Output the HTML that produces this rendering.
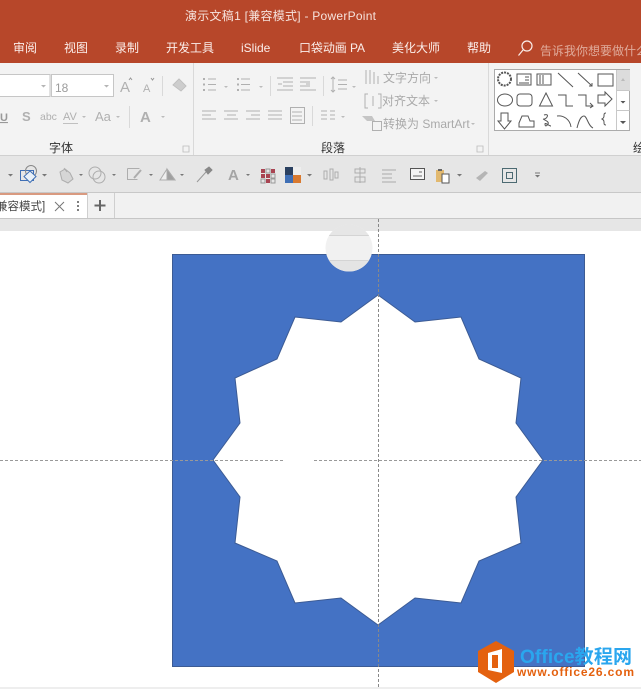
<!DOCTYPE html>
<html><head><meta charset="utf-8"><style>
html,body{margin:0;padding:0;background:#fff;width:641px;height:689px;overflow:hidden}
svg{display:block}
text{font-family:"Liberation Sans","Noto Sans CJK SC",sans-serif}
</style></head><body>
<svg width="641" height="689" viewBox="0 0 641 689" xmlns="http://www.w3.org/2000/svg">
<rect width="641" height="689" fill="#fff"/>
<!-- title -->
<rect width="641" height="63" fill="#b7472a"/>
<text x="185" y="20" font-size="12" fill="#f6e3dd" textLength="191">演示文稿1 [兼容模式]  -  PowerPoint</text>
<g fill="#fbeeea" font-size="12">
<text x="13" y="52">审阅</text><text x="64" y="52">视图</text><text x="115" y="52">录制</text>
<text x="166" y="52">开发工具</text><text x="241" y="52">iSlide</text><text x="299" y="52" textLength="66">口袋动画 PA</text>
<text x="392" y="52">美化大师</text><text x="467" y="52">帮助</text>
<text x="540" y="55" fill="#e0ab9b">告诉我你想要做什么</text>
</g>
<g fill="none" stroke="#fbeeea" stroke-width="1.200"><circle cx="527" cy="46" r="5"/><path d="M523 50l-4.500 5.500"/></g>
<!-- ribbon -->
<rect y="63" width="641" height="93" fill="#f3f3f3"/>
<rect y="155" width="641" height="1" fill="#d0d0d0"/>
<g stroke="#d9d9d9"><path d="M193.500 63v92M488.500 63v92M129.500 106v22M162.500 76v20M270.500 76v20M323.500 76v20M312.500 106v20"/></g>
<!-- font boxes -->
<rect x="-2" y="74.500" width="52" height="22" fill="#fff" stroke="#c6c6c6"/>
<rect x="51.500" y="74.500" width="62" height="22" fill="#fff" stroke="#c6c6c6"/>
<text x="55" y="92" font-size="12" fill="#9c9c9c">18</text>
<path d="M41 85h5l-2.500 2.500zM104 85h5l-2.500 2.500z" fill="#b5b5b5"/>
<g fill="#b0b0b0"><text x="120" y="92" font-size="15">A</text><text x="143" y="92" font-size="11">A</text>
<text x="140" y="122" font-size="15" font-weight="bold">A</text><text x="0" y="121" font-size="11" font-weight="bold" text-decoration="underline" fill="#999">U</text>
<text x="22" y="121" font-size="13" font-weight="bold">S</text><text x="40" y="120" font-size="10.500">abc</text>
<text x="63" y="120" font-size="11">AV</text><text x="95" y="121" font-size="13">Aa</text></g>
<path d="M173 85l6-6 7 7-5 5zM63 123.500h15" stroke="#c0c0c0" fill="#cdcdcd"/>
<path d="M129 80l1.500-2 1.500 2M151 78l1.500 2 1.500-2" stroke="#999" fill="none"/>
<path d="M82 116h4l-2 2zM116 116h4l-2 2zM161 116h4l-2 2zM224 86h4l-2 2zM259 86h4l-2 2zM352 86h4l-2 2zM434 77h4l-2 2zM434 100h4l-2 2zM471 123h4l-2 2zM341 116h4l-2 2z" fill="#bbb"/>
<!-- paragraph icons -->
<g stroke="#b0b0b0" fill="none">
<path d="M208 79h8M208 84.500h8M208 90h8M241 79h9M241 84.500h9M241 90h9"/>
<path d="M203 79h2M203 84.500h2M203 90h2M237 79h2M237 84.500h2M237 90h2" stroke-width="2"/>
<path d="M277 78h16M283 82h10M283 86h10M277 90h16M300 78h16M300 82h10M300 86h10M300 90h16M278 84h4M306 84h4"/>
<path d="M338 80h9M338 84.500h9M338 89h9M333 77v15M331 79l2-2 2 2M331 90l2 2 2-2"/>
<path d="M202 111h14M202 115h9M202 119h14M224 111h14M227 115h9M224 119h14M246 111h14M251 115h9M246 119h14M268 111h14M268 115h14M268 119h14"/>
<rect x="290.500" y="107.500" width="14" height="16"/><path d="M292 112h10M292 116h10M292 120h10"/>
<path d="M321 111h6M321 115h6M321 119h6M330 111h5M330 115h5M330 119h5"/>
<path d="M366 70v14M370 70v14M374 72v12M378 76v8"/>
<path d="M368 94h-3v14h3M378 94h3v14h-3M373 96v10"/>
<rect x="372.500" y="121.500" width="9" height="9" fill="#f3f3f3"/>
</g>
<path d="M362 116h10l3 5h-8z" fill="#c5c5c5"/>
<g fill="#a9a9a9" font-size="12">
<text x="383" y="82">文字方向</text><text x="382" y="105">对齐文本</text><text x="383" y="128">转换为 SmartArt</text>
</g>
<g fill="#333" font-size="12"><text x="49" y="152">字体</text><text x="321" y="152">段落</text><text x="633" y="152">绘</text></g>
<path d="M183 146h6v6h-6zM477 146h6v6h-6z" fill="none" stroke="#bbb" stroke-width=".8"/>
<!-- shapes gallery -->
<rect x="494.500" y="69.500" width="135" height="61" fill="#fff" stroke="#ababab"/>
<rect x="617" y="70" width="13" height="21" fill="#dcdcdc"/>
<path d="M616.500 70v60M616.500 90.500h13M616.500 110.500h13" stroke="#c8c8c8"/>
<path d="M620.500 101h5l-2.500 2.500zM620 118h6M620 121h6l-3 3z" fill="#555"/>
<path d="M623 78l-2 3h4z" fill="#bbb"/>
<g fill="none" stroke="#555" stroke-width="1">
<circle cx="504.500" cy="79" r="6.500" stroke-dasharray="2 1" stroke-width="2"/>
<rect x="517" y="74" width="14" height="11"/><path d="M525 77h4M525 80h4M519 83h10"/>
<rect x="537" y="74" width="14" height="11"/><path d="M540 75v9M543 75v9"/>
<path d="M558 73l15 14M578 73l14 13M589 86h3v-3"/>
<rect x="598" y="74" width="15" height="12"/>
<ellipse cx="505" cy="100" rx="7.500" ry="6"/><rect x="517" y="94" width="15" height="12" rx="3"/><path d="M546 93l6.500 13h-13zM558 95h8v11h7M578 95h8v11h7M590 103l3 3-3 2"/>
<path d="M598 95h7v-3l7 7-7 7v-3h-7z"/>
<path d="M501 113h7v8h3l-6.500 8-6.500-8h3z"/>
<path d="M519 123l3-7h6l2 5h4v6h-15z"/><path d="M544 115c6-2 3 4 0 4s6 2 4 5-3 2-3 0 4 2 6 2"/>
<path d="M557 116c6-1 13 3 14 11M577 128c2-8 4-12 7-12s4 10 9 12M606 113c-2 0-2 1-2 3s-2 3-2 3 2 1 2 3 0 3 2 3"/>
</g>
<!-- toolbar -->
<rect y="156" width="641" height="37" fill="#e6e6e6"/>
<rect y="192" width="641" height="1" fill="#c8c8c8"/>
<g fill="none" stroke="#adadad">
<path d="M60 172l5-3 5 4 3 6-5 4-6-3z" fill="#d6d6d6"/><path d="M64 168l3 4"/>
<circle cx="95" cy="173" r="6"/><circle cx="99" cy="177" r="6"/>
<path d="M127.500 168.500h12M127.500 168.500v11h10"/><path d="M134 178l7-8" stroke-width="2"/>
<path d="M167 169l8 11h-15z" fill="#f0f0f0"/><path d="M167 169l8 11h-8z" fill="#a0a0a0"/>
<path d="M197 182l9-10" stroke="#999"/><path d="M205 170l4-3 3 3-4 4z" fill="#888" stroke="#888"/>
<path d="M324 171h3v8h-3zM330 169h3v11h-3zM335 172h3v6h-3z"/>
<path d="M355 169h10v4h-10zM355 177h10v5h-10zM360 167v16"/><path d="M382 170h14M382 174h10M382 178h10M382 182h14" stroke="#aaa"/>
</g>
<rect x="20.500" y="170.500" width="13" height="10" fill="none" stroke="#3f6fb5"/>
<circle cx="31" cy="171" r="5.500" fill="none" stroke="#888"/>
<path d="M30 171l6 5.500-6 6-6-6z" fill="#e8f0f8" stroke="#3f6fb5"/>
<text x="228" y="180" font-size="15" font-weight="bold" fill="#a5a5a5">A</text>
<g fill="#a94452"><rect x="261" y="169" width="4" height="4"/><rect x="266" y="169" width="4" height="4" fill="none" stroke="#999"/><rect x="271" y="169" width="4" height="4"/><rect x="261" y="174" width="4" height="4"/><rect x="266" y="174" width="4" height="4"/><rect x="271" y="174" width="4" height="4" fill="none" stroke="#999"/><rect x="261" y="179" width="4" height="4" fill="none" stroke="#999"/><rect x="266" y="179" width="4" height="4"/><rect x="271" y="179" width="4" height="4" fill="none" stroke="#999"/></g>
<rect x="285" y="167" width="8" height="8" fill="#2a4060"/><rect x="293" y="167" width="8" height="8" fill="#eee"/><rect x="285" y="175" width="8" height="8" fill="#3f6fb5"/><rect x="293" y="175" width="8" height="8" fill="#d97a30"/>
<rect x="410.500" y="168.500" width="14" height="11" fill="#f4f4f4" stroke="#555"/><path d="M413 176h9M419 172h3" stroke="#666"/>
<rect x="436" y="170" width="8" height="12" fill="#e2b96f"/><rect x="442" y="174" width="7" height="9" fill="#fff" stroke="#555"/><path d="M438 169h4v2h-4z" fill="#666"/>
<path d="M476 178l9-7 3 2-8 8z" fill="#b5b5b5"/>
<rect x="502.500" y="168.500" width="14" height="14" fill="none" stroke="#4c6a72"/><rect x="506.500" y="172.500" width="6" height="6" fill="none" stroke="#4c6a72"/>
<path d="M8 174h5l-2.500 2.500zM42 174h5l-2.500 2.500zM79 174h4l-2 2zM112 174h4l-2 2zM149 174h4l-2 2zM180 174h4l-2 2zM246 174h4l-2 2zM307 174h5l-2.500 2.500zM457 174h5l-2.500 2.500zM535 175h5l-2.500 2.500zM535 172.500h5v1h-5z" fill="#777"/>
<!-- tabs -->
<rect y="193" width="641" height="25" fill="#f1f1f1"/>
<rect y="218" width="641" height="13" fill="#e6e6e6"/>
<rect y="218" width="641" height="1" fill="#c6c6c6"/>
<rect y="193" width="87" height="25" fill="#fff"/>
<rect y="193" width="87" height="2" fill="#d99a80"/>
<path d="M87.500 193v25M114.500 193v25" stroke="#cfcfcf"/>
<text x="-4" y="210" font-size="11.500" fill="#444">兼容模式]</text>
<path d="M55 202l9 9M64 202l-9 9" stroke="#777" fill="none"/>
<path d="M78 201v2M78 205v2M78 209v2" stroke="#555" stroke-width="1.500"/>
<path d="M100 200v11M94.500 205.500h11" stroke="#666" stroke-width="2"/>
<!-- slide -->
<rect x="172.500" y="254.500" width="412" height="412" fill="#4472c4" stroke="#3c5b94"/>
<polygon points="378,295 415,322 461,317 479,359 521,378 516,423 543,460 516,497 521,543 479,561 461,603 415,598 378,625 341,598 295,603 277,561 235,543 240,497 213,460 240,423 235,378 277,359 295,317 341,322" fill="#fff" stroke="#3c5b94"/>
<!-- guides -->
<path d="M378.500 219V689" stroke="#888" stroke-dasharray="3 2" fill="none"/>
<path d="M0 460.500H285M314 460.500H641" stroke="#999" stroke-dasharray="3 2" fill="none"/>
<!-- handle -->
<clipPath id="hc"><circle cx="349" cy="248" r="23.500"/></clipPath>
<g clip-path="url(#hc)">
<rect x="320" y="224" width="60" height="50" fill="#f1f1f1"/>
<rect x="320" y="260" width="60" height="14" fill="#e4e4e4"/>
<rect x="320" y="224" width="60" height="11" fill="#e6e6e6"/>
<path d="M320 235.500h60M320 260.500h60" stroke="#d4d4d4"/>
</g>
<!-- bottom rule -->
<rect y="687" width="641" height="2" fill="#eee"/>
<!-- logo -->
<path d="M496 641l18 10v21l-18 11-18-11v-21z" fill="#e4610f"/>
<path d="M488 653l14-4v24l-14-3z" fill="#fff"/><rect x="492" y="655" width="6" height="13" fill="#e4610f"/>
<text x="520" y="663" font-size="19" font-weight="bold" fill="#2aa6ee" textLength="112">Office教程网</text>
<text x="517" y="676" font-size="12" font-weight="bold" fill="#e4610f" textLength="117">www.office26.com</text>
</svg>
</body></html>
